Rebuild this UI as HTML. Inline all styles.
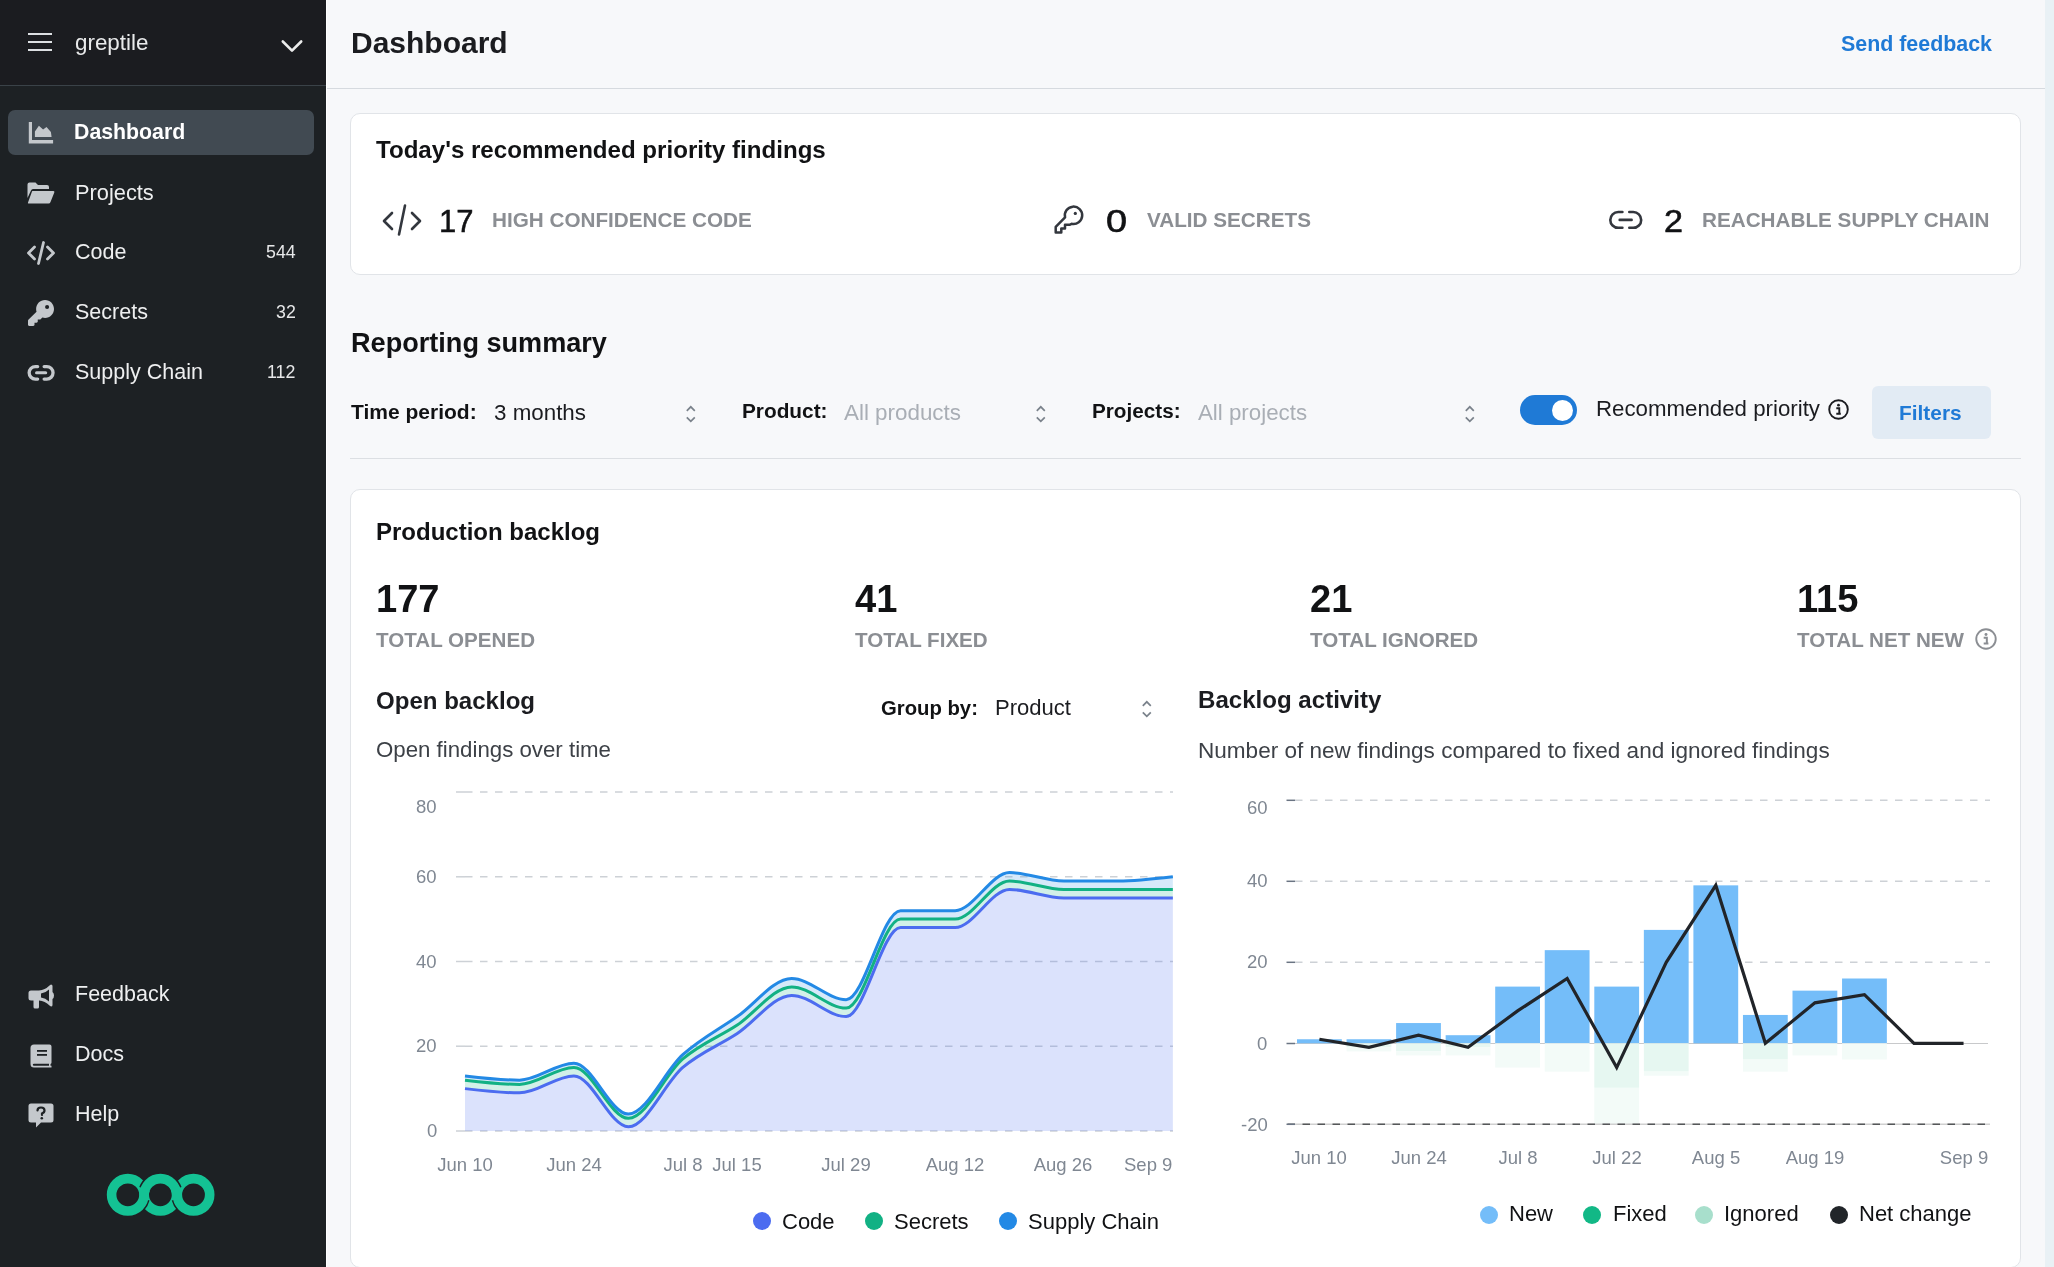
<!DOCTYPE html>
<html><head><meta charset="utf-8"><title>Dashboard</title>
<style>
html,body{margin:0;padding:0;}
body{width:2054px;height:1267px;overflow:hidden;position:relative;background:#f7f8fa;font-family:"Liberation Sans", sans-serif;}
.t{position:absolute;line-height:1;white-space:nowrap;will-change:transform;}
svg{position:absolute;overflow:visible;}
</style></head><body>
<div style="position:absolute;left:0px;top:0px;width:326px;height:1267px;background:#1d2124;"></div>
<div style="position:absolute;left:0px;top:0px;width:326px;height:85px;background:#1b1c20;"></div>
<div style="position:absolute;left:0px;top:85px;width:326px;height:1px;background:#3a4248;"></div>
<div style="position:absolute;left:326px;top:0px;width:1px;height:1267px;background:#ffffff;"></div>
<div style="position:absolute;left:28px;top:33px;width:24px;height:2px;background:#dcdfe2;"></div>
<div style="position:absolute;left:28px;top:41px;width:24px;height:2px;background:#dcdfe2;"></div>
<div style="position:absolute;left:28px;top:49px;width:24px;height:2px;background:#dcdfe2;"></div>
<div class="t" style="top:32.33px;font-size:22.4px;font-weight:400;color:#e9eaeb;left:74.70px;">greptile</div>
<svg style="left:280px;top:38.5px" width="24" height="16" viewBox="0 0 24 16"><path d="M2.8 2.5 L12 11.7 L21.2 2.5" fill="none" stroke="#ececec" stroke-width="2.6" stroke-linecap="round" stroke-linejoin="round"/></svg>
<div style="position:absolute;left:8px;top:110px;width:306px;height:45px;background:#414a52;border-radius:7px;"></div>
<svg style="left:28px;top:122px" width="26" height="22" viewBox="0 0 26 22"><path d="M0.8 0 H4 V18 H25.1 V21.5 H0.8 Z" fill="#c4c8cc"/><path d="M6.9 9.5 L10.9 3.8 L15.1 7.6 L18.5 5.0 L22.9 10.1 L23.6 15.1 H6.9 Z" fill="#c4c8cc"/></svg>
<div class="t" style="top:122.47px;font-size:21.3px;font-weight:700;color:#ffffff;left:74.20px;">Dashboard</div>
<svg style="left:27px;top:182px" width="28" height="22" viewBox="0 0 28 22"><path d="M0.5 2.5 Q0.5 0.5 2.5 0.5 H8.5 L11 3 H20 Q22 3 22 5 V7 H6 Q4.5 7 4 8.5 L0.5 16 Z" fill="#c4c8cc"/><path d="M5.5 9 H26.5 Q27.8 9 27.3 10.5 L23.5 20 Q23 21.5 21.5 21.5 H1.5 Q0.5 21.5 1 20.5 L4.8 10 Q5 9 5.5 9Z" fill="#c4c8cc"/></svg>
<div class="t" style="top:181.84px;font-size:21.8px;font-weight:400;color:#eeeff0;left:75.20px;">Projects</div>
<svg style="left:26px;top:241px" width="30" height="24" viewBox="0 0 30 24"><path d="M8.5 6 L2.5 12 L8.5 18 M21.5 6 L27.5 12 L21.5 18 M17.5 1.5 L12.5 22.5" fill="none" stroke="#c4c8cc" stroke-width="2.8" stroke-linecap="round" stroke-linejoin="round"/></svg>
<div class="t" style="top:242.00px;font-size:21.5px;font-weight:400;color:#eeeff0;left:74.70px;">Code</div>
<div class="t" style="top:244.33px;font-size:17.8px;font-weight:400;color:#e6e7e8;right:1758.50px;">544</div>
<svg style="left:28px;top:300px" width="26" height="26" viewBox="0 0 512 512"><path d="M336 352c97.2 0 176-78.8 176-176S433.2 0 336 0S160 78.8 160 176c0 18.7 2.9 36.8 8.3 53.7L7 391c-4.5 4.5-7 10.6-7 17v80c0 13.3 10.7 24 24 24h80c13.3 0 24-10.7 24-24V448h40c13.3 0 24-10.7 24-24V384h40c6.4 0 12.5-2.5 17-7l33.3-33.3c16.9 5.4 35 8.3 53.7 8.3zM376 96a40 40 0 1 1 0 80 40 40 0 1 1 0-80z" fill="#c4c8cc"/></svg>
<div class="t" style="top:302.00px;font-size:21.5px;font-weight:400;color:#eeeff0;left:74.70px;">Secrets</div>
<div class="t" style="top:304.33px;font-size:17.8px;font-weight:400;color:#e6e7e8;right:1758.50px;">32</div>
<svg style="left:27px;top:364px" width="28" height="18" viewBox="0 0 28 18"><path d="M10.65 2.55 H8.4 A6.25 6.25 0 0 0 8.4 15.05 H10.65 M17.15 2.55 H19.8 A6.25 6.25 0 0 1 19.8 15.05 H17.15" fill="none" stroke="#c4c8cc" stroke-width="3.3" stroke-linecap="round"/><path d="M9.5 8.8 H18.7" stroke="#c4c8cc" stroke-width="3" stroke-linecap="round"/></svg>
<div class="t" style="top:362.00px;font-size:21.5px;font-weight:400;color:#eeeff0;left:74.70px;">Supply Chain</div>
<div class="t" style="top:364.33px;font-size:17.8px;font-weight:400;color:#e6e7e8;right:1758.50px;">112</div>
<svg style="left:28px;top:984px" width="26" height="25" viewBox="0 0 26 25"><path d="M23 0.5 Q24.5 0.5 24.5 2 V8 Q26 9 26 11.5 Q26 14 24.5 15 V21 Q24.5 22.5 23 22.5 L21.5 21.5 Q17 17 11 16.5 V23 Q11 24.5 9.5 24.5 H7 Q5.5 24.5 5.5 23 V16.5 H3 Q0.5 16.5 0.5 14 V9 Q0.5 6.5 3 6.5 H11 Q17 6 21.5 1.5 Z M21 5.5 Q17.5 9 13 9.5 V13.5 Q17.5 14 21 17.5 Z" fill="#c4c8cc" fill-rule="evenodd"/></svg>
<div class="t" style="top:984.20px;font-size:21.5px;font-weight:400;color:#eeeff0;left:74.80px;">Feedback</div>
<svg style="left:30px;top:1044px" width="22" height="24" viewBox="0 0 22 24"><path d="M4 0.5 H19.5 Q21.5 0.5 21.5 2.5 V18.5 Q21.5 19.5 20.5 20 V21.8 H21.5 V23.5 H4 Q0.5 23.5 0.5 20 V4 Q0.5 0.5 4 0.5 Z M4 19.8 Q2.8 19.8 2.8 20.8 Q2.8 21.8 4 21.8 H19 V19.8 Z" fill="#c4c8cc" fill-rule="evenodd"/><rect x="7" y="6" width="10" height="1.8" fill="#1d2124"/><rect x="7" y="10" width="10" height="1.8" fill="#1d2124"/></svg>
<div class="t" style="top:1044.10px;font-size:21.5px;font-weight:400;color:#eeeff0;left:74.80px;">Docs</div>
<svg style="left:28px;top:1103px" width="26" height="25" viewBox="0 0 26 25"><path d="M3 0.5 H23 Q25.5 0.5 25.5 3 V17 Q25.5 19.5 23 19.5 H13 L8 24.5 V19.5 H3 Q0.5 19.5 0.5 17 V3 Q0.5 0.5 3 0.5 Z" fill="#c4c8cc"/><path d="M9.5 7.5 Q9.5 4.5 13 4.5 Q16.5 4.5 16.5 7.5 Q16.5 9.5 14 10.5 V12" fill="none" stroke="#1d2124" stroke-width="2.2" stroke-linecap="round"/><circle cx="13.8" cy="15.2" r="1.3" fill="#1d2124"/></svg>
<div class="t" style="top:1104.20px;font-size:21.5px;font-weight:400;color:#eeeff0;left:74.80px;">Help</div>
<svg style="left:100px;top:1165px" width="120" height="60" viewBox="0 0 120 60"><circle cx="60.4" cy="29.8" r="16.2" fill="none" stroke="#14c294" stroke-width="9.6"/><path d="M43.45,33.99 A16.2,16.2 0 0 1 31.99,45.45" fill="none" stroke="#1d2124" stroke-width="12.6"/><path d="M89.31,45.45 A16.2,16.2 0 0 1 77.85,33.99" fill="none" stroke="#1d2124" stroke-width="12.6"/><circle cx="27.8" cy="29.8" r="16.2" fill="none" stroke="#14c294" stroke-width="9.6"/><circle cx="93.5" cy="29.8" r="16.2" fill="none" stroke="#14c294" stroke-width="9.6"/><path d="M45.18,24.26 A16.2,16.2 0 0 1 75.62,24.26" fill="none" stroke="#1d2124" stroke-width="12.6"/><path d="M44.20,29.80 A16.2,16.2 0 0 1 76.60,29.80" fill="none" stroke="#14c294" stroke-width="9.6"/></svg>
<div style="position:absolute;left:327px;top:0px;width:1718px;height:88px;background:#f7f8fa;"></div>
<div style="position:absolute;left:327px;top:88px;width:1718px;height:1px;background:#d6dadf;"></div>
<div style="position:absolute;left:2045px;top:0px;width:9px;height:1267px;background:#e9f1f5;"></div>
<div class="t" style="top:28.20px;font-size:30px;font-weight:700;color:#1b1c20;left:351.00px;">Dashboard</div>
<div class="t" style="top:33.68px;font-size:21.4px;font-weight:700;color:#1f7ad6;right:62.00px;">Send feedback</div>
<div style="position:absolute;left:350px;top:113px;width:1669px;height:160px;background:#fff;border:1px solid #e1e4e8;border-radius:10px;"></div>
<div class="t" style="top:138.29px;font-size:24.1px;font-weight:700;color:#111214;left:376.00px;">Today's recommended priority findings</div>
<svg style="left:381px;top:204px" width="42" height="32" viewBox="0 0 42 32"><path d="M11 9 L3 17 L11 25 M31 9 L39 17 L31 25 M24 1.5 L18 30.5" fill="none" stroke="#33373e" stroke-width="2.6" stroke-linecap="round" stroke-linejoin="round"/></svg>
<div class="t" style="top:206.05px;font-size:31px;font-weight:400;color:#111214;left:438.50px;-webkit-text-stroke:0.5px #111214;">17</div>
<div class="t" style="top:209.77px;font-size:20.7px;font-weight:700;color:#8b8e93;left:492.10px;">HIGH CONFIDENCE CODE</div>
<svg style="left:1045px;top:195px" width="45" height="45" viewBox="0 0 45 45"><path d="M20.06 22.4 L10.7 31.9 V37.6 H16.3 V33.6 H20.0 V29.8 H24.5 L26.6 28.8 A8.7 8.7 0 1 0 20.06 22.4 Z" fill="none" stroke="#33373e" stroke-width="2.5" stroke-linejoin="round"/><circle cx="30.3" cy="18.4" r="1.6" fill="#33373e"/></svg>
<div class="t" style="top:206.05px;font-size:31px;font-weight:400;color:#111214;left:1105.50px;-webkit-text-stroke:0.6px #111214;transform:scaleX(1.22);transform-origin:0 0;">0</div>
<div class="t" style="top:210.27px;font-size:20.7px;font-weight:700;color:#8b8e93;left:1147.30px;">VALID SECRETS</div>
<svg style="left:1600px;top:200px" width="45" height="40" viewBox="0 0 45 40"><path d="M22.4 12.0 H18.2 A7.9 7.9 0 0 0 18.2 27.8 H22.4 M29.3 12.0 H33.3 A7.9 7.9 0 0 1 33.3 27.8 H29.3 M19.7 19.9 H31.6" fill="none" stroke="#33373e" stroke-width="2.6" stroke-linecap="round"/></svg>
<div class="t" style="top:206.05px;font-size:31px;font-weight:400;color:#111214;left:1663.50px;-webkit-text-stroke:0.6px #111214;transform:scaleX(1.1);transform-origin:0 0;">2</div>
<div class="t" style="top:210.27px;font-size:20.7px;font-weight:700;color:#8b8e93;left:1701.90px;">REACHABLE SUPPLY CHAIN</div>
<div class="t" style="top:329.05px;font-size:27.1px;font-weight:700;color:#111214;left:350.60px;">Reporting summary</div>
<div class="t" style="top:400.72px;font-size:21px;font-weight:700;color:#111214;left:350.60px;">Time period:</div>
<div class="t" style="top:401.56px;font-size:22.37px;font-weight:400;color:#1b1c20;left:494.20px;">3 months</div>
<svg style="left:683.5px;top:404.5px" width="14" height="18" viewBox="0 0 14 18"><path d="M2.8 5.8 L6.8 1.8 L10.8 5.8 M2.8 12.3 L6.8 16.4 L10.8 12.3" fill="none" stroke="#7a828b" stroke-width="1.7" stroke-linecap="butt" stroke-linejoin="miter"/></svg>
<div class="t" style="top:400.89px;font-size:20.8px;font-weight:700;color:#111214;left:741.70px;">Product:</div>
<div class="t" style="top:401.53px;font-size:22.4px;font-weight:400;color:#a9aeb5;left:844.40px;">All products</div>
<svg style="left:1033.5px;top:404.5px" width="14" height="18" viewBox="0 0 14 18"><path d="M2.8 5.8 L6.8 1.8 L10.8 5.8 M2.8 12.3 L6.8 16.4 L10.8 12.3" fill="none" stroke="#7a828b" stroke-width="1.7" stroke-linecap="butt" stroke-linejoin="miter"/></svg>
<div class="t" style="top:400.97px;font-size:20.7px;font-weight:700;color:#111214;left:1091.90px;">Projects:</div>
<div class="t" style="top:401.62px;font-size:22.3px;font-weight:400;color:#a9aeb5;left:1197.60px;">All projects</div>
<svg style="left:1462.5px;top:404.5px" width="14" height="18" viewBox="0 0 14 18"><path d="M2.8 5.8 L6.8 1.8 L10.8 5.8 M2.8 12.3 L6.8 16.4 L10.8 12.3" fill="none" stroke="#7a828b" stroke-width="1.7" stroke-linecap="butt" stroke-linejoin="miter"/></svg>
<div style="position:absolute;left:1520px;top:395px;width:57px;height:30px;background:#1f7ad6;border-radius:15px;"></div>
<div style="position:absolute;left:1551.8px;top:399.8px;width:21.2px;height:21.2px;background:#ffffff;border-radius:11px;"></div>
<div class="t" style="top:397.54px;font-size:22.27px;font-weight:400;color:#1b1c20;left:1595.90px;">Recommended priority</div>
<svg style="left:1827.5px;top:398.5px" width="21" height="21" viewBox="0 0 21 21"><circle cx="10.5" cy="10.5" r="9.3" fill="none" stroke="#1b1c20" stroke-width="1.9"/><circle cx="10.5" cy="6.2" r="1.4" fill="#1b1c20"/><path d="M8.3 9.3 H11.3 V14.8 M8.3 14.8 H12.8" fill="none" stroke="#1b1c20" stroke-width="1.9"/></svg>
<div style="position:absolute;left:1872px;top:386px;width:119px;height:53px;background:#e2ebf4;border-radius:6px;"></div>
<div class="t" style="top:402.54px;font-size:20.86px;font-weight:700;color:#1f7ad6;left:1899.30px;">Filters</div>
<div style="position:absolute;left:350px;top:458px;width:1671px;height:1px;background:#dcdfe3;"></div>
<div style="position:absolute;left:350px;top:489px;width:1669px;height:777px;background:#fff;border:1px solid #e1e4e8;border-radius:10px;"></div>
<div class="t" style="top:519.88px;font-size:24px;font-weight:700;color:#111214;left:375.60px;">Production backlog</div>
<div class="t" style="top:580.14px;font-size:38.1px;font-weight:700;color:#111214;left:375.60px;">177</div>
<div class="t" style="top:629.56px;font-size:20.6px;font-weight:700;color:#8b8e93;left:375.60px;">TOTAL OPENED</div>
<div class="t" style="top:580.14px;font-size:38.1px;font-weight:700;color:#111214;left:855.00px;">41</div>
<div class="t" style="top:629.56px;font-size:20.6px;font-weight:700;color:#8b8e93;left:855.00px;">TOTAL FIXED</div>
<div class="t" style="top:580.14px;font-size:38.1px;font-weight:700;color:#111214;left:1309.80px;">21</div>
<div class="t" style="top:629.56px;font-size:20.6px;font-weight:700;color:#8b8e93;left:1309.80px;">TOTAL IGNORED</div>
<div class="t" style="top:580.14px;font-size:38.1px;font-weight:700;color:#111214;left:1797.00px;">115</div>
<div class="t" style="top:629.56px;font-size:20.6px;font-weight:700;color:#8b8e93;left:1797.00px;">TOTAL NET NEW</div>
<svg style="left:1974.5px;top:628px" width="22" height="22" viewBox="0 0 21 21"><circle cx="10.5" cy="10.5" r="9.3" fill="none" stroke="#8b8e93" stroke-width="1.8"/><circle cx="10.5" cy="6.2" r="1.4" fill="#8b8e93"/><path d="M8.3 9.3 H11.3 V14.8 M8.3 14.8 H12.8" fill="none" stroke="#8b8e93" stroke-width="1.9"/></svg>
<div class="t" style="top:688.64px;font-size:24.05px;font-weight:700;color:#1b1c20;left:375.60px;">Open backlog</div>
<div class="t" style="top:697.61px;font-size:20.3px;font-weight:700;color:#111214;left:880.60px;">Group by:</div>
<div class="t" style="top:697.13px;font-size:22.05px;font-weight:400;color:#1b1c20;left:995.40px;">Product</div>
<svg style="left:1139.5px;top:700px" width="14" height="18" viewBox="0 0 14 18"><path d="M2.8 5.8 L6.8 1.8 L10.8 5.8 M2.8 12.3 L6.8 16.4 L10.8 12.3" fill="none" stroke="#7a828b" stroke-width="1.7" stroke-linecap="butt" stroke-linejoin="miter"/></svg>
<div class="t" style="top:738.86px;font-size:22.25px;font-weight:400;color:#3d4147;left:375.60px;">Open findings over time</div>
<div class="t" style="top:687.60px;font-size:24.09px;font-weight:700;color:#1b1c20;left:1197.90px;">Backlog activity</div>
<div class="t" style="top:740.10px;font-size:22.56px;font-weight:400;color:#3d4147;left:1197.90px;">Number of new findings compared to fixed and ignored findings</div>
<svg style="left:0;top:0" width="2054" height="1267" viewBox="0 0 2054 1267"><line x1="456" y1="1131.0" x2="465" y2="1131.0" stroke="#cdd1d6" stroke-width="1.5"/><line x1="465" y1="1131.0" x2="1173" y2="1131.0" stroke="#cdd1d6" stroke-width="1.5" stroke-dasharray="7.5 7.5"/><line x1="456" y1="1046.2" x2="465" y2="1046.2" stroke="#cdd1d6" stroke-width="1.5"/><line x1="465" y1="1046.2" x2="1173" y2="1046.2" stroke="#cdd1d6" stroke-width="1.5" stroke-dasharray="7.5 7.5"/><line x1="456" y1="961.5" x2="465" y2="961.5" stroke="#cdd1d6" stroke-width="1.5"/><line x1="465" y1="961.5" x2="1173" y2="961.5" stroke="#cdd1d6" stroke-width="1.5" stroke-dasharray="7.5 7.5"/><line x1="456" y1="876.8" x2="465" y2="876.8" stroke="#cdd1d6" stroke-width="1.5"/><line x1="465" y1="876.8" x2="1173" y2="876.8" stroke="#cdd1d6" stroke-width="1.5" stroke-dasharray="7.5 7.5"/><line x1="456" y1="792.0" x2="465" y2="792.0" stroke="#cdd1d6" stroke-width="1.5"/><line x1="465" y1="792.0" x2="1173" y2="792.0" stroke="#cdd1d6" stroke-width="1.5" stroke-dasharray="7.5 7.5"/><path d="M465.00,1088.62 C483.15,1090.74 501.30,1092.86 519.45,1092.86 C537.60,1092.86 555.75,1075.91 573.90,1075.91 C592.05,1075.91 610.20,1126.76 628.35,1126.76 C646.50,1126.76 664.65,1082.97 682.80,1067.44 C700.95,1051.90 719.10,1045.54 737.25,1033.54 C755.40,1021.53 773.55,995.40 791.70,995.40 C809.85,995.40 828.00,1016.59 846.15,1016.59 C864.30,1016.59 882.45,927.60 900.60,927.60 C918.75,927.60 936.90,927.60 955.05,927.60 C973.20,927.60 991.35,889.46 1009.50,889.46 C1027.65,889.46 1045.80,897.94 1063.95,897.94 C1082.10,897.94 1100.25,897.94 1118.40,897.94 C1136.55,897.94 1154.70,897.94 1172.85,897.94 L1172.85,1131.00 L465.00,1131.00 Z" fill="#4c6cf0" fill-opacity="0.2"/><path d="M465.00,1080.15 C483.15,1082.27 501.30,1084.39 519.45,1084.39 C537.60,1084.39 555.75,1067.44 573.90,1067.44 C592.05,1067.44 610.20,1118.29 628.35,1118.29 C646.50,1118.29 664.65,1074.50 682.80,1058.96 C700.95,1043.43 719.10,1037.07 737.25,1025.06 C755.40,1013.06 773.55,986.92 791.70,986.92 C809.85,986.92 828.00,1008.11 846.15,1008.11 C864.30,1008.11 882.45,919.12 900.60,919.12 C918.75,919.12 936.90,919.12 955.05,919.12 C973.20,919.12 991.35,880.99 1009.50,880.99 C1027.65,880.99 1045.80,889.46 1063.95,889.46 C1082.10,889.46 1100.25,889.46 1118.40,889.46 C1136.55,889.46 1154.70,889.46 1172.85,889.46 L1172.85,897.94 C1154.70,897.94 1136.55,897.94 1118.40,897.94 C1100.25,897.94 1082.10,897.94 1063.95,897.94 C1045.80,897.94 1027.65,889.46 1009.50,889.46 C991.35,889.46 973.20,927.60 955.05,927.60 C936.90,927.60 918.75,927.60 900.60,927.60 C882.45,927.60 864.30,1016.59 846.15,1016.59 C828.00,1016.59 809.85,995.40 791.70,995.40 C773.55,995.40 755.40,1021.53 737.25,1033.54 C719.10,1045.54 700.95,1051.90 682.80,1067.44 C664.65,1082.97 646.50,1126.76 628.35,1126.76 C610.20,1126.76 592.05,1075.91 573.90,1075.91 C555.75,1075.91 537.60,1092.86 519.45,1092.86 C501.30,1092.86 483.15,1090.74 465.00,1088.62 Z" fill="#12b184" fill-opacity="0.19"/><path d="M465.00,1075.91 C483.15,1078.03 501.30,1080.15 519.45,1080.15 C537.60,1080.15 555.75,1063.20 573.90,1063.20 C592.05,1063.20 610.20,1114.05 628.35,1114.05 C646.50,1114.05 664.65,1070.97 682.80,1054.72 C700.95,1038.48 719.10,1029.30 737.25,1016.59 C755.40,1003.88 773.55,978.45 791.70,978.45 C809.85,978.45 828.00,999.64 846.15,999.64 C864.30,999.64 882.45,910.65 900.60,910.65 C918.75,910.65 936.90,910.65 955.05,910.65 C973.20,910.65 991.35,872.51 1009.50,872.51 C1027.65,872.51 1045.80,880.99 1063.95,880.99 C1082.10,880.99 1100.25,880.99 1118.40,880.99 C1136.55,880.99 1154.70,878.87 1172.85,876.75 L1172.85,889.46 C1154.70,889.46 1136.55,889.46 1118.40,889.46 C1100.25,889.46 1082.10,889.46 1063.95,889.46 C1045.80,889.46 1027.65,880.99 1009.50,880.99 C991.35,880.99 973.20,919.12 955.05,919.12 C936.90,919.12 918.75,919.12 900.60,919.12 C882.45,919.12 864.30,1008.11 846.15,1008.11 C828.00,1008.11 809.85,986.92 791.70,986.92 C773.55,986.92 755.40,1013.06 737.25,1025.06 C719.10,1037.07 700.95,1043.43 682.80,1058.96 C664.65,1074.50 646.50,1118.29 628.35,1118.29 C610.20,1118.29 592.05,1067.44 573.90,1067.44 C555.75,1067.44 537.60,1084.39 519.45,1084.39 C501.30,1084.39 483.15,1082.27 465.00,1080.15 Z" fill="#2389e5" fill-opacity="0.19"/><path d="M465.00,1088.62 C483.15,1090.74 501.30,1092.86 519.45,1092.86 C537.60,1092.86 555.75,1075.91 573.90,1075.91 C592.05,1075.91 610.20,1126.76 628.35,1126.76 C646.50,1126.76 664.65,1082.97 682.80,1067.44 C700.95,1051.90 719.10,1045.54 737.25,1033.54 C755.40,1021.53 773.55,995.40 791.70,995.40 C809.85,995.40 828.00,1016.59 846.15,1016.59 C864.30,1016.59 882.45,927.60 900.60,927.60 C918.75,927.60 936.90,927.60 955.05,927.60 C973.20,927.60 991.35,889.46 1009.50,889.46 C1027.65,889.46 1045.80,897.94 1063.95,897.94 C1082.10,897.94 1100.25,897.94 1118.40,897.94 C1136.55,897.94 1154.70,897.94 1172.85,897.94" fill="none" stroke="#4c6cf0" stroke-width="3"/><path d="M465.00,1080.15 C483.15,1082.27 501.30,1084.39 519.45,1084.39 C537.60,1084.39 555.75,1067.44 573.90,1067.44 C592.05,1067.44 610.20,1118.29 628.35,1118.29 C646.50,1118.29 664.65,1074.50 682.80,1058.96 C700.95,1043.43 719.10,1037.07 737.25,1025.06 C755.40,1013.06 773.55,986.92 791.70,986.92 C809.85,986.92 828.00,1008.11 846.15,1008.11 C864.30,1008.11 882.45,919.12 900.60,919.12 C918.75,919.12 936.90,919.12 955.05,919.12 C973.20,919.12 991.35,880.99 1009.50,880.99 C1027.65,880.99 1045.80,889.46 1063.95,889.46 C1082.10,889.46 1100.25,889.46 1118.40,889.46 C1136.55,889.46 1154.70,889.46 1172.85,889.46" fill="none" stroke="#12b184" stroke-width="3"/><path d="M465.00,1075.91 C483.15,1078.03 501.30,1080.15 519.45,1080.15 C537.60,1080.15 555.75,1063.20 573.90,1063.20 C592.05,1063.20 610.20,1114.05 628.35,1114.05 C646.50,1114.05 664.65,1070.97 682.80,1054.72 C700.95,1038.48 719.10,1029.30 737.25,1016.59 C755.40,1003.88 773.55,978.45 791.70,978.45 C809.85,978.45 828.00,999.64 846.15,999.64 C864.30,999.64 882.45,910.65 900.60,910.65 C918.75,910.65 936.90,910.65 955.05,910.65 C973.20,910.65 991.35,872.51 1009.50,872.51 C1027.65,872.51 1045.80,880.99 1063.95,880.99 C1082.10,880.99 1100.25,880.99 1118.40,880.99 C1136.55,880.99 1154.70,878.87 1172.85,876.75" fill="none" stroke="#2389e5" stroke-width="3"/></svg>
<div class="t" style="top:797.64px;font-size:18.5px;font-weight:400;color:#7f8792;right:1617.00px;">80</div>
<div class="t" style="top:867.74px;font-size:18.5px;font-weight:400;color:#7f8792;right:1617.00px;">60</div>
<div class="t" style="top:952.54px;font-size:18.5px;font-weight:400;color:#7f8792;right:1617.00px;">40</div>
<div class="t" style="top:1037.14px;font-size:18.5px;font-weight:400;color:#7f8792;right:1617.00px;">20</div>
<div class="t" style="top:1121.64px;font-size:18.5px;font-weight:400;color:#7f8792;right:1617.00px;">0</div>
<div class="t" style="top:1156.34px;font-size:18.5px;font-weight:400;color:#7f8792;left:465.00px;transform:translateX(-50%);">Jun 10</div>
<div class="t" style="top:1156.34px;font-size:18.5px;font-weight:400;color:#7f8792;left:573.80px;transform:translateX(-50%);">Jun 24</div>
<div class="t" style="top:1156.34px;font-size:18.5px;font-weight:400;color:#7f8792;left:682.60px;transform:translateX(-50%);">Jul 8</div>
<div class="t" style="top:1156.34px;font-size:18.5px;font-weight:400;color:#7f8792;left:737.00px;transform:translateX(-50%);">Jul 15</div>
<div class="t" style="top:1156.34px;font-size:18.5px;font-weight:400;color:#7f8792;left:845.80px;transform:translateX(-50%);">Jul 29</div>
<div class="t" style="top:1156.34px;font-size:18.5px;font-weight:400;color:#7f8792;left:954.60px;transform:translateX(-50%);">Aug 12</div>
<div class="t" style="top:1156.34px;font-size:18.5px;font-weight:400;color:#7f8792;left:1063.40px;transform:translateX(-50%);">Aug 26</div>
<div class="t" style="top:1156.34px;font-size:18.5px;font-weight:400;color:#7f8792;right:881.40px;">Sep 9</div>
<div style="position:absolute;left:753.4px;top:1211.7px;width:18px;height:18px;background:#4c6cf0;border-radius:9px;"></div>
<div class="t" style="top:1210.57px;font-size:22px;font-weight:400;color:#111214;left:782.40px;">Code</div>
<div style="position:absolute;left:864.8px;top:1211.7px;width:18px;height:18px;background:#12b184;border-radius:9px;"></div>
<div class="t" style="top:1210.57px;font-size:22px;font-weight:400;color:#111214;left:894.20px;">Secrets</div>
<div style="position:absolute;left:998.9px;top:1211.7px;width:18px;height:18px;background:#2389e5;border-radius:9px;"></div>
<div class="t" style="top:1210.57px;font-size:22px;font-weight:400;color:#111214;left:1027.90px;">Supply Chain</div>
<svg style="left:0;top:0" width="2054" height="1267" viewBox="0 0 2054 1267"><line x1="1295" y1="800.3" x2="1990" y2="800.3" stroke="#cdd1d6" stroke-width="1.5" stroke-dasharray="7.5 7.5"/><line x1="1286.5" y1="800.3" x2="1295" y2="800.3" stroke="#6a7483" stroke-width="1.5"/><line x1="1295" y1="881.3" x2="1990" y2="881.3" stroke="#cdd1d6" stroke-width="1.5" stroke-dasharray="7.5 7.5"/><line x1="1286.5" y1="881.3" x2="1295" y2="881.3" stroke="#6a7483" stroke-width="1.5"/><line x1="1295" y1="962.3" x2="1990" y2="962.3" stroke="#cdd1d6" stroke-width="1.5" stroke-dasharray="7.5 7.5"/><line x1="1286.5" y1="962.3" x2="1295" y2="962.3" stroke="#6a7483" stroke-width="1.5"/><line x1="1295" y1="1043.5" x2="1988" y2="1043.5" stroke="#c8c9cb" stroke-width="1.2"/><line x1="1286.5" y1="1043.5" x2="1295" y2="1043.5" stroke="#6a7483" stroke-width="1.5"/><rect x="1297.00" y="1039.25" width="44.8" height="4.05" fill="#74bdf9"/><rect x="1346.55" y="1039.25" width="44.8" height="4.05" fill="#74bdf9"/><rect x="1346.55" y="1043.30" width="44.8" height="4.05" fill="#e6f7f1"/><rect x="1346.55" y="1047.35" width="44.8" height="4.05" fill="#f3fbf8"/><rect x="1396.10" y="1023.05" width="44.8" height="20.25" fill="#74bdf9"/><rect x="1396.10" y="1043.30" width="44.8" height="8.10" fill="#e6f7f1"/><rect x="1396.10" y="1051.40" width="44.8" height="4.05" fill="#f3fbf8"/><rect x="1445.65" y="1035.20" width="44.8" height="8.10" fill="#74bdf9"/><rect x="1445.65" y="1043.30" width="44.8" height="4.05" fill="#e6f7f1"/><rect x="1445.65" y="1047.35" width="44.8" height="8.10" fill="#f3fbf8"/><rect x="1495.20" y="986.60" width="44.8" height="56.70" fill="#74bdf9"/><rect x="1495.20" y="1043.30" width="44.8" height="24.30" fill="#f3fbf8"/><rect x="1544.75" y="950.15" width="44.8" height="93.15" fill="#74bdf9"/><rect x="1544.75" y="1043.30" width="44.8" height="28.35" fill="#f3fbf8"/><rect x="1594.30" y="986.60" width="44.8" height="56.70" fill="#74bdf9"/><rect x="1594.30" y="1043.30" width="44.8" height="44.55" fill="#e6f7f1"/><rect x="1594.30" y="1087.85" width="44.8" height="36.45" fill="#f3fbf8"/><rect x="1643.85" y="929.90" width="44.8" height="113.40" fill="#74bdf9"/><rect x="1643.85" y="1043.30" width="44.8" height="28.35" fill="#e6f7f1"/><rect x="1643.85" y="1071.65" width="44.8" height="4.05" fill="#f3fbf8"/><rect x="1693.40" y="885.35" width="44.8" height="157.95" fill="#74bdf9"/><rect x="1742.95" y="1014.95" width="44.8" height="28.35" fill="#74bdf9"/><rect x="1742.95" y="1043.30" width="44.8" height="16.20" fill="#e6f7f1"/><rect x="1742.95" y="1059.50" width="44.8" height="12.15" fill="#f3fbf8"/><rect x="1792.50" y="990.65" width="44.8" height="52.65" fill="#74bdf9"/><rect x="1792.50" y="1043.30" width="44.8" height="12.15" fill="#f3fbf8"/><rect x="1842.05" y="978.50" width="44.8" height="64.80" fill="#74bdf9"/><rect x="1842.05" y="1043.30" width="44.8" height="16.20" fill="#f3fbf8"/><line x1="1295" y1="1124.3" x2="1990" y2="1124.3" stroke="#d0d0d0" stroke-width="1.5"/><line x1="1287.5" y1="1124.3" x2="1990" y2="1124.3" stroke="#555759" stroke-width="1.5" stroke-dasharray="7.5 7.5"/><line x1="1286.5" y1="1124.3" x2="1295" y2="1124.3" stroke="#6a7483" stroke-width="1.5"/><polyline points="1319.40,1039.25 1368.95,1047.35 1418.50,1035.20 1468.05,1047.35 1517.60,1010.90 1567.15,978.50 1616.70,1067.60 1666.25,962.30 1715.80,885.35 1765.35,1043.30 1814.90,1002.80 1864.45,994.70 1914.00,1043.30 1963.55,1043.30" fill="none" stroke="#212429" stroke-width="3.2" stroke-linejoin="miter"/></svg>
<div class="t" style="top:798.74px;font-size:18.5px;font-weight:400;color:#7f8792;right:786.30px;">60</div>
<div class="t" style="top:872.44px;font-size:18.5px;font-weight:400;color:#7f8792;right:786.30px;">40</div>
<div class="t" style="top:953.44px;font-size:18.5px;font-weight:400;color:#7f8792;right:786.30px;">20</div>
<div class="t" style="top:1035.34px;font-size:18.5px;font-weight:400;color:#7f8792;right:786.30px;">0</div>
<div class="t" style="top:1116.24px;font-size:18.5px;font-weight:400;color:#7f8792;right:786.30px;">-20</div>
<div class="t" style="top:1148.84px;font-size:18.5px;font-weight:400;color:#7f8792;left:1319.40px;transform:translateX(-50%);">Jun 10</div>
<div class="t" style="top:1148.84px;font-size:18.5px;font-weight:400;color:#7f8792;left:1418.50px;transform:translateX(-50%);">Jun 24</div>
<div class="t" style="top:1148.84px;font-size:18.5px;font-weight:400;color:#7f8792;left:1517.60px;transform:translateX(-50%);">Jul 8</div>
<div class="t" style="top:1148.84px;font-size:18.5px;font-weight:400;color:#7f8792;left:1616.70px;transform:translateX(-50%);">Jul 22</div>
<div class="t" style="top:1148.84px;font-size:18.5px;font-weight:400;color:#7f8792;left:1715.80px;transform:translateX(-50%);">Aug 5</div>
<div class="t" style="top:1148.84px;font-size:18.5px;font-weight:400;color:#7f8792;left:1814.90px;transform:translateX(-50%);">Aug 19</div>
<div class="t" style="top:1148.84px;font-size:18.5px;font-weight:400;color:#7f8792;left:1963.55px;transform:translateX(-50%);">Sep 9</div>
<div style="position:absolute;left:1479.6px;top:1205.6px;width:18px;height:18px;background:#74bdf9;border-radius:9px;"></div>
<div class="t" style="top:1203.47px;font-size:22px;font-weight:400;color:#111214;left:1509.00px;">New</div>
<div style="position:absolute;left:1582.6px;top:1205.6px;width:18px;height:18px;background:#12b886;border-radius:9px;"></div>
<div class="t" style="top:1203.47px;font-size:22px;font-weight:400;color:#111214;left:1612.50px;">Fixed</div>
<div style="position:absolute;left:1694.7px;top:1205.6px;width:18px;height:18px;background:#a8dfcc;border-radius:9px;"></div>
<div class="t" style="top:1203.47px;font-size:22px;font-weight:400;color:#111214;left:1723.80px;">Ignored</div>
<div style="position:absolute;left:1830px;top:1205.6px;width:18px;height:18px;background:#212529;border-radius:9px;"></div>
<div class="t" style="top:1203.47px;font-size:22px;font-weight:400;color:#111214;left:1858.70px;">Net change</div>
</body></html>
